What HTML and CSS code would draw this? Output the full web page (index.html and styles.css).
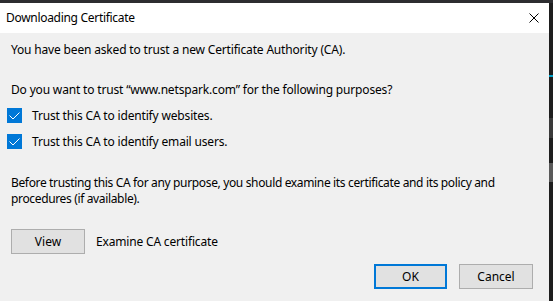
FILE: index.html
```html
<!DOCTYPE html>
<html>
<head>
<meta charset="utf-8">
<link rel="stylesheet" href="styles.css">
</head>
<body>
<div class="screen">
  <div class="dialog">
    <div class="titlebar">
      <span class="title">Downloading Certificate</span>
      <svg class="close" width="10" height="10" viewBox="0 0 10 10"><path d="M0.5 0.5 L9.5 9.5 M9.5 0.5 L0.5 9.5" stroke="#000" stroke-width="1" fill="none"/></svg>
    </div>
    <div class="content">
      <p class="line first">You have been asked to trust a new Certificate Authority (CA).</p>
      <p class="line question">Do you want to trust “www.netspark.com” for the following purposes?</p>
      <div class="checks">
        <label class="check"><span class="box"><svg width="15" height="15" viewBox="0 0 15 15"><path d="M2.5 7.5 L6 11 L12.5 4.5" stroke="#fff" stroke-width="1" fill="none"/></svg></span>Trust this CA to identify websites.</label>
        <label class="check"><span class="box"><svg width="15" height="15" viewBox="0 0 15 15"><path d="M2.5 7.5 L6 11 L12.5 4.5" stroke="#fff" stroke-width="1" fill="none"/></svg></span>Trust this CA to identify email users.</label>
      </div>
      <p class="line advice">Before trusting this CA for any purpose, you should examine its certificate and its policy and procedures (if available).</p>
      <div class="viewrow">
        <button class="btn view">View</button>
        <span>Examine CA certificate</span>
      </div>
      <div class="actions">
        <button class="btn ok">OK</button>
        <button class="btn">Cancel</button>
      </div>
    </div>
  </div>
  <div class="sidebar">
    <div class="mark blue"></div>
    <div class="mark grey"></div>
    <div class="mark thumb"></div>
  </div>
</div>
</body>
</html>
```
FILE: styles.css
```css
html, body {
  margin: 0;
  padding: 0;
  background: #2d2d30;
  width: 553px;
  height: 301px;
  overflow: hidden;
}
.screen {
  display: flex;
  padding-top: 3px;
  height: 298px;
  font-family: "Segoe UI", "Noto Sans", sans-serif;
  font-size: 12px;
  letter-spacing: -0.17px;
  color: #000;
}
.dialog {
  width: 549px;
  background: #f0f0f0;
  display: flex;
  flex-direction: column;
}
.titlebar {
  height: 30px;
  background: #fff;
  display: flex;
  align-items: center;
  justify-content: space-between;
  padding: 0 10px 0 6px;
}
.title { line-height: 16px; letter-spacing: -0.3px; }
.close { display: block; }
.content {
  padding: 0 16px 0 11px;
  display: flex;
  flex-direction: column;
}
.line {
  margin: 0;
  line-height: 16px;
}
.first { margin-top: 9px; }
.question { margin-top: 24px; }
.checks {
  margin-top: 9px;
  display: flex;
  flex-direction: column;
  gap: 9px;
}
.check {
  display: flex;
  align-items: center;
  height: 17px;
  margin-left: -4px;
  gap: 10px;
}
.box {
  width: 15px;
  height: 15px;
  background: #0078d7;
  display: block;
}
.box svg { display: block; }
.advice { margin-top: 25px; letter-spacing: -0.35px; }
.viewrow {
  margin-top: 22px;
  display: flex;
  align-items: center;
  gap: 11px;
}
.btn {
  font: inherit;
  color: #000;
  background: #e1e1e1;
  border: 1px solid #adadad;
  width: 74px;
  height: 25px;
  padding: 0;
  margin: 0;
}
.actions {
  margin-top: 10px;
  display: flex;
  justify-content: flex-end;
  gap: 12px;
}
.ok {
  border: 2px solid #0078d7;
  width: 73px;
}
.sidebar {
  width: 4px;
  background: #1e1e1e;
  position: relative;
}
.mark { position: absolute; left: 0; width: 4px; }
.blue { top: 72px; height: 2px; background: #00a2cc; }
.grey { top: 115px; height: 20px; background: #3a3a3a; }
.thumb { top: 160px; height: 19px; background: #5a5a5a; }
```
